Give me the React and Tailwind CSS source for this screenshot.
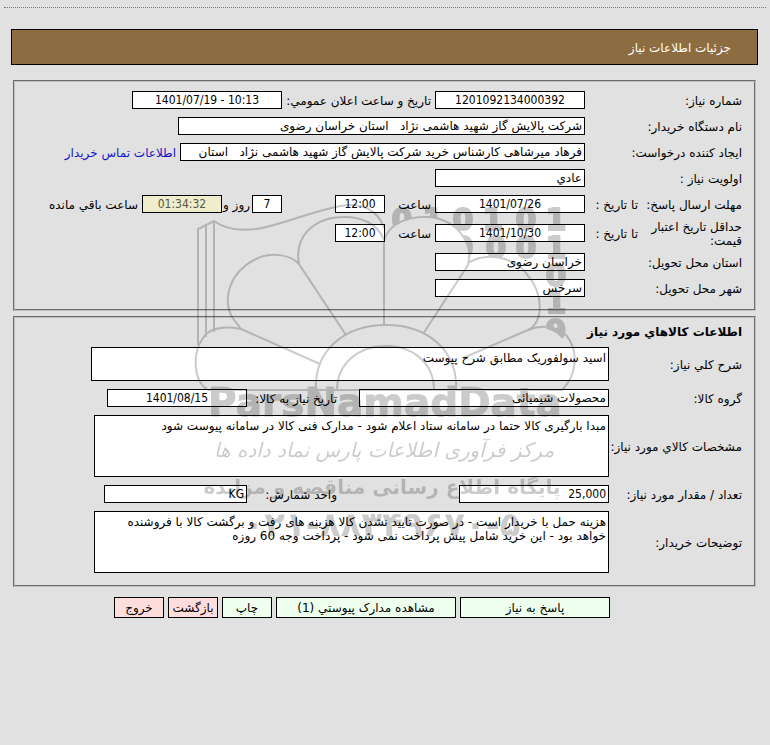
const label = "shrink-0 pt-[2px] text-[12px] leading-[14px]";
const field =
  "h-[18px] shrink-0 border border-black bg-white px-[2px] text-[12px] leading-4 outline-none";
const number = "text-center font-['DejaVu_Sans_Condensed','DejaVu_Sans',sans-serif]";
const area =
  "block shrink-0 resize-none overflow-hidden border border-black bg-white px-[2px] py-[3px] text-[12px] leading-[14px] outline-none";
const panel =
  "mr-[14px] ml-[13px] flex flex-col gap-2 border-2 border-[#c0c0c0] [border-style:groove] pr-3 pb-3";
const button =
  "h-[21px] shrink-0 cursor-pointer whitespace-nowrap border border-black text-center text-[12px] leading-4";
const row = "flex h-[18px] items-center";
const areaRow = "flex items-center";

function Watermark() {
  return (
    <div className="pointer-events-none absolute inset-x-0 top-[200px] flex justify-center" aria-hidden="true">
      <svg width="410" height="350" viewBox="180 200 410 350" className="shrink-0 opacity-20">
        <defs>
          {/* hides the digits that run behind the petals */}
          <mask id="petals">
            <rect x="180" y="200" width="410" height="350" fill="#fff" />
            <path
              d="M384 240C390 222 410 216 428 217C456 219 474 242 468 265C486 252 512 256 526 273C546 296 542 324 528 330C545 325 560 330 570 350L384 390Z"
              fill="#000"
            />
          </mask>
        </defs>
        <g fill="none" stroke="#000" strokeWidth="2">
          <path d="M198 345V229L214 221C228 231 246 231 262 228C290 222 310 212 340 206C362 202 378 210 384 228" />
          <path d="M206 337V225M214 332V221" />
          <path d="M384 325V240C378 224 362 217 345 217C314 217 294 236 299 264L346 335" />
          <path d="M384 240C390 222 410 216 428 217C456 219 474 242 468 265L423 334" />
          <path d="M299 264C290 254 270 252 256 259C230 272 222 298 232 317L241 329L320 364" />
          <path d="M468 263C486 252 512 256 526 273C546 296 542 324 528 330L463 358" />
          <path d="M241 329C225 326 210 327 203 338C193 352 192 380 208 390H562C576 376 580 352 566 335C556 325 540 325 528 330" />
          <path d="M316 390C314 350 345 325 386 325C427 325 458 350 456 390" />
          <path d="M337 390C337 364 358 346 386 346C414 346 434 364 434 390" />
        </g>
        <g
          mask="url(#petals)"
          direction="ltr"
          textAnchor="middle"
          stroke="#000"
          strokeWidth="2"
          className="font-['DejaVu_Sans',sans-serif] text-[30px] font-bold"
        >
          <text x="402" y="230">0</text>
          <text x="433" y="230">1</text>
          <text x="463" y="230">0</text>
          <text x="493" y="230">1</text>
          <text x="526" y="230">0</text>
          <text x="556" y="230">1</text>
          <text x="463" y="258">0</text>
          <text x="496" y="258">0</text>
          <text x="526" y="258">0</text>
          <text x="556" y="258">1</text>
          <text x="556" y="286">0</text>
          <text x="556" y="313">1</text>
          <text x="556" y="341">9</text>
        </g>
        <g textAnchor="middle">
          <text
            x="385"
            y="416"
            direction="ltr"
            stroke="#000"
            strokeWidth="1"
            className="font-['DejaVu_Sans',sans-serif] text-[39px] font-bold"
          >
            ParsNamadData
          </text>
          <text x="384" y="457" direction="rtl" className="font-['DejaVu_Sans',sans-serif] text-[20px] italic">مرکز فرآوری اطلاعات پارس نماد داده ها</text>
          <text x="382" y="494" direction="rtl" className="font-['DejaVu_Sans',sans-serif] text-[20px] font-bold">پایگاه اطلاع رسانی مناقصه و مزایده</text>
          <text x="382" y="536" direction="ltr" className="font-['DejaVu_Sans',sans-serif] text-[34px] font-bold">۰۲۱-۸۸۳۴۹۶۷۰-۵</text>
        </g>
      </svg>
    </div>
  );
}

export default function App() {
  return (
    <div
      dir="rtl"
      className="relative min-h-screen overflow-x-hidden bg-[#e1e1e1] pt-[7px] font-['DejaVu_Sans',sans-serif] text-[12px] text-black"
    >
      <div className="mx-1 border-t border-dotted border-[#777]" />

      <header className="mt-[21px] mr-3 ml-[11px] flex h-9 items-center border border-black bg-[#8e6c41] pr-[26px]">
        <h1 className="pt-[2px] text-[12px] text-white">جزئیات اطلاعات نیاز</h1>
      </header>

      <form onSubmit={(e) => e.preventDefault()}>
        <section className={`${panel} mt-[15px] pt-[9px]`}>
          <div className={row}>
            <label htmlFor="number" className={`${label} w-[157px]`}>شماره نیاز:</label>
            <input id="number" readOnly defaultValue="1201092134000392" className={`${field} ${number} w-[150px]`} />
            <label htmlFor="announced" className={`${label} w-[153px] pr-1`}>تاریخ و ساعت اعلان عمومي:</label>
            <input id="announced" dir="ltr" readOnly defaultValue="1401/07/19 - 10:13" className={`${field} ${number} w-[150px]`} />
          </div>

          <div className={row}>
            <label htmlFor="buyer" className={`${label} w-[157px]`}>نام دستگاه خریدار:</label>
            <input
              id="buyer"
              readOnly
              defaultValue="شرکت پالایش گاز شهید هاشمی نژاد   استان خراسان رضوی"
              className={`${field} w-[407px]`}
            />
          </div>

          <div className={row}>
            <label htmlFor="creator" className={`${label} w-[157px]`}>ایجاد کننده درخواست:</label>
            <input
              id="creator"
              readOnly
              defaultValue="فرهاد میرشاهی کارشناس خرید شرکت پالایش گاز شهید هاشمی نژاد   استان"
              className={`${field} w-[405px]`}
            />
            <a href="#contact" className={`${label} pr-1 text-[#1414c8]`}>اطلاعات تماس خریدار</a>
          </div>

          <div className={row}>
            <label htmlFor="priority" className={`${label} w-[157px]`}>اولویت نیاز :</label>
            <input id="priority" readOnly defaultValue="عادي" className={`${field} w-[150px]`} />
          </div>

          <div className={row}>
            <span className={`${label} w-[104px] whitespace-nowrap`}>مهلت ارسال پاسخ:</span>
            <label htmlFor="replyDate" className={`${label} w-[53px]`}>تا تاریخ :</label>
            <input id="replyDate" dir="ltr" readOnly defaultValue="1401/07/26" className={`${field} ${number} w-[150px]`} />
            <label htmlFor="replyTime" className={`${label} w-[50px] pr-1`}>ساعت</label>
            <input id="replyTime" dir="ltr" readOnly defaultValue="12:00" className={`${field} ${number} w-[50px]`} />
            <input id="days" readOnly defaultValue="7" className={`${field} ${number} mr-[53px] w-[30px]`} />
            <label htmlFor="days" className={`${label} w-[30px] whitespace-nowrap pr-[2px]`}>روز و</label>
            <input
              id="left"
              dir="ltr"
              readOnly
              defaultValue="01:34:32"
              className="h-[18px] w-[80px] shrink-0 border border-black bg-[#eeeecc] px-[2px] text-center font-['DejaVu_Sans_Condensed','DejaVu_Sans',sans-serif] text-[12px] leading-4 text-[#555544] outline-none"
            />
            <label htmlFor="left" className={`${label} pr-1`}>ساعت باقي مانده</label>
          </div>

          <div className="flex h-6 items-center">
            <span className={`${label} w-[104px] pl-3`}>حداقل تاریخ اعتبار قیمت:</span>
            <label htmlFor="validDate" className={`${label} w-[53px]`}>تا تاریخ :</label>
            <input id="validDate" dir="ltr" readOnly defaultValue="1401/10/30" className={`${field} ${number} w-[150px]`} />
            <label htmlFor="validTime" className={`${label} w-[50px] pr-1`}>ساعت</label>
            <input id="validTime" dir="ltr" readOnly defaultValue="12:00" className={`${field} ${number} w-[50px]`} />
          </div>

          <div className={row}>
            <label htmlFor="province" className={`${label} w-[157px]`}>استان محل تحویل:</label>
            <input id="province" readOnly defaultValue="خراسان رضوی" className={`${field} w-[150px]`} />
          </div>

          <div className={row}>
            <label htmlFor="city" className={`${label} w-[157px]`}>شهر محل تحویل:</label>
            <input id="city" readOnly defaultValue="سرخس" className={`${field} w-[150px]`} />
          </div>
        </section>

        <section className={`${panel} mt-[5px] pt-[7px]`}>
          <h2 className="text-[12px] leading-[14px] font-bold">اطلاعات كالاهاي مورد نیاز</h2>

          <div className={areaRow}>
            <label htmlFor="summary" className={`${label} w-[133px]`}>شرح کلي نیاز:</label>
            <textarea id="summary" readOnly defaultValue="اسید سولفوریک مطابق شرح پیوست" className={`${area} h-[34px] w-[518px]`} />
          </div>

          <div className={row}>
            <label htmlFor="group" className={`${label} w-[133px]`}>گروه کالا:</label>
            <input id="group" readOnly defaultValue="محصولات شیمیائی" className={`${field} w-[250px]`} />
            <label htmlFor="needDate" className={`${label} w-[112px] pr-[22px]`}>تاریخ نیاز به کالا:</label>
            <input id="needDate" dir="ltr" readOnly defaultValue="1401/08/15" className={`${field} ${number} w-[140px]`} />
          </div>

          <div className={areaRow}>
            <label htmlFor="specs" className={`${label} w-[133px] whitespace-nowrap`}>مشخصات کالاي مورد نیاز:</label>
            <textarea
              id="specs"
              readOnly
              defaultValue="مبدا بارگیری کالا حتما در سامانه ستاد اعلام شود - مدارک فنی کالا در سامانه پیوست شود"
              className={`${area} h-[62px] w-[515px]`}
            />
          </div>

          <div className={row}>
            <label htmlFor="amount" className={`${label} w-[133px]`}>تعداد / مقدار مورد نیاز:</label>
            <input
              id="amount"
              readOnly
              defaultValue="25,000"
              className={`${field} w-[150px] font-['DejaVu_Sans_Condensed','DejaVu_Sans',sans-serif]`}
            />
            <label htmlFor="unit" className={`${label} w-[212px] pr-[122px]`}>واحد شمارش:</label>
            <input
              id="unit"
              readOnly
              defaultValue="KG"
              className={`${field} w-[143px] font-['DejaVu_Sans_Condensed','DejaVu_Sans',sans-serif]`}
            />
          </div>

          <div className={areaRow}>
            <label htmlFor="notes" className={`${label} w-[133px]`}>توضیحات خریدار:</label>
            <textarea
              id="notes"
              readOnly
              defaultValue="هزینه حمل با خریدار است - در صورت تایید نشدن کالا هزینه های رفت و برگشت کالا با فروشنده خواهد بود - این خرید شامل پیش پرداخت نمی شود - پرداخت وجه 60 روزه"
              className={`${area} h-[62px] w-[515px]`}
            />
          </div>
        </section>

        <div className="mt-[10px] flex gap-1 pr-[160px]">
          <button type="button" className={`${button} w-[150px] bg-[#eeffee]`}>پاسخ به نیاز</button>
          <button type="button" className={`${button} w-[180px] bg-[#eeffee]`}>مشاهده مدارک پیوستي (1)</button>
          <button type="button" className={`${button} w-[50px] bg-[#eeffee]`}>چاپ</button>
          <button type="button" className={`${button} w-[50px] bg-[#ffdddd]`}>بازگشت</button>
          <button type="button" className={`${button} w-[50px] bg-[#ffdddd]`}>خروج</button>
        </div>
      </form>

      <Watermark />
    </div>
  );
}
